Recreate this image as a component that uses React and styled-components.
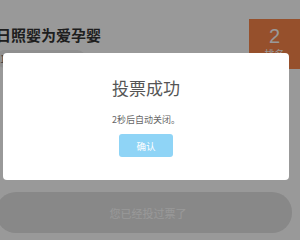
import React from 'react';
import styled, { createGlobalStyle } from 'styled-components';

const GlobalStyle = createGlobalStyle`
  html, body {
    margin: 0;
    padding: 0;
    background: #fff;
    overflow: hidden;
  }
  body {
    font-family: "Noto Sans CJK SC", "Liberation Sans", sans-serif;
  }
`;

const Page = styled.div`
  width: 310px;
  height: 240px;
  margin-left: -4px;
  display: flex;
  flex-direction: column;
`;

const Header = styled.div`
  display: flex;
  justify-content: space-between;
  align-items: flex-start;
  padding-top: 19px;
`;

const Info = styled.div`
  display: flex;
  flex-direction: column;
  gap: 5px;
  padding-top: 6px;
`;

const ShopName = styled.h1`
  margin: 0;
  font-size: 15px;
  line-height: 20px;
  font-weight: 700;
  color: #333;
`;

const Tag = styled.span`
  display: inline-block;
  width: 90px;
  height: 18px;
  border-radius: 9px;
  background: #eee;
  color: #666;
  font-size: 10px;
  line-height: 18px;
  padding-left: 4px;
  box-sizing: border-box;
`;

const Rank = styled.div`
  width: 57px;
  height: 50px;
  background: #fa854a;
  color: #fff;
  display: flex;
  flex-direction: column;
  align-items: center;
  padding-top: 6px;
  padding-right: 6px;
  box-sizing: border-box;
`;

const RankNum = styled.span`
  font-family: "Liberation Sans", sans-serif;
  font-size: 20px;
  line-height: 22px;
`;

const RankLabel = styled.span`
  font-size: 10px;
  line-height: 14px;
`;

const VoteButton = styled.div`
  margin: auto 14px 7px 0;
  height: 41px;
  border-radius: 20px;
  background: #e3e3e3;
  color: #fff;
  font-size: 11px;
  display: flex;
  align-items: center;
  justify-content: center;
  padding-left: 8px;
`;

const Overlay = styled.div`
  position: fixed;
  inset: 0;
  background: rgba(0, 0, 0, 0.4);
`;

const Dialog = styled.div`
  position: fixed;
  left: 3px;
  top: 53px;
  width: 286px;
  height: 127px;
  background: #fff;
  border-radius: 4px;
  display: flex;
  flex-direction: column;
  align-items: center;
  box-sizing: border-box;
  padding-top: 24px;
`;

const DialogTitle = styled.h2`
  margin: 0;
  font-family: "Noto Sans CJK SC", serif;
  font-weight: 400;
  font-size: 17px;
  line-height: 22px;
  color: #555;
`;

const DialogText = styled.p`
  margin: 15px 0 0;
  font-size: 9px;
  line-height: 12px;
  color: #666;
`;

const ConfirmButton = styled.button`
  margin-top: 8px;
  width: 54px;
  height: 23px;
  border: none;
  border-radius: 3px;
  background: #8fd4f6;
  color: #fff;
  font-family: "Noto Sans CJK SC", sans-serif;
  font-size: 9.5px;
  padding: 0;
`;

export default function App() {
  return (
    <>
      <GlobalStyle />
      <Page>
        <Header>
          <Info>
            <ShopName>日照婴为爱孕婴</ShopName>
            <Tag>1</Tag>
          </Info>
          <Rank>
            <RankNum>2</RankNum>
            <RankLabel>排名</RankLabel>
          </Rank>
        </Header>
        <VoteButton>您已经投过票了</VoteButton>
      </Page>
      <Overlay />
      <Dialog>
        <DialogTitle>投票成功</DialogTitle>
        <DialogText>2秒后自动关闭。</DialogText>
        <ConfirmButton>确认</ConfirmButton>
      </Dialog>
    </>
  );
}
